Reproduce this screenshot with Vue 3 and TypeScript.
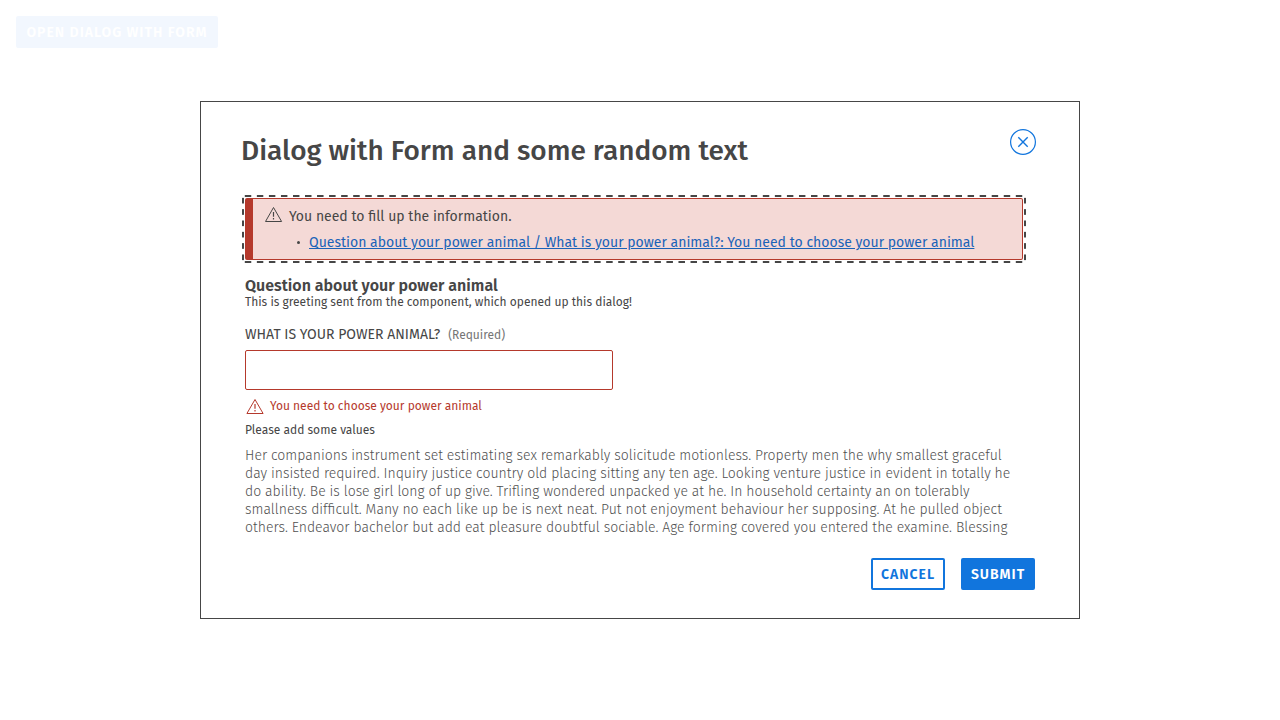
<script setup lang="ts">
import { ref } from 'vue'

const animal = ref('')
const story: string[] = [
  'Her companions instrument set estimating sex remarkably solicitude motionless. Property men the why smallest graceful',
  'day insisted required. Inquiry justice country old placing sitting any ten age. Looking venture justice in evident in totally he',
  'do ability. Be is lose girl long of up give. Trifling wondered unpacked ye at he. In household certainty an on tolerably',
  'smallness difficult. Many no each like up be is next neat. Put not enjoyment behaviour her supposing. At he pulled object',
  'others. Endeavor bachelor but add eat pleasure doubtful sociable. Age forming covered you entered the examine. Blessing',
]
</script>

<template>
  <main class="page">
    <button class="btn open" type="button">OPEN DIALOG WITH FORM</button>

    <div class="backdrop">
      <form class="dialog" role="dialog" aria-labelledby="dialog-title" novalidate @submit.prevent>
        <header class="head">
          <h1 id="dialog-title">Dialog with Form and some random text</h1>
          <button class="close" type="button" aria-label="Close">
            <svg viewBox="0 0 26 26" width="26" height="26" fill="none" stroke="currentColor">
              <circle cx="13" cy="13" r="12.4" stroke-width="1.2" />
              <path d="M8.3 8.3l9.4 9.4M17.7 8.3l-9.4 9.4" stroke-width="1.4" />
            </svg>
          </button>
        </header>

        <div class="content">
          <section class="alert" role="alert">
            <svg class="warn" viewBox="0 0 18 16" width="18" height="16" fill="none" stroke="currentColor" stroke-linejoin="round">
              <path d="M8.5 0.5L16.6 14.5H0.5Z" />
              <path d="M8.5 5v4.8M8.5 11v1.5" stroke-width="1.2" />
            </svg>
            <div>
              <p>You need to fill up the information.</p>
              <ul>
                <li>
                  <a href="#animal">Question about your power animal / What is your power animal?: You need to choose your power animal</a>
                </li>
              </ul>
            </div>
          </section>

          <h2>Question about your power animal</h2>
          <p class="small">This is greeting sent from the component, which opened up this dialog!</p>

          <div class="label-row">
            <label for="animal">WHAT IS YOUR POWER ANIMAL?</label>
            <span>(Required)</span>
          </div>
          <input id="animal" v-model="animal" type="text" aria-describedby="animal-error animal-hint" />
          <p id="animal-error" class="error">
            <svg class="warn" viewBox="0 0 18 16" width="18" height="16" fill="none" stroke="currentColor" stroke-linejoin="round">
              <path d="M9 1.5L17.1 15.5H0.9Z" />
              <path d="M9 6v4.8M9 12v1.5" stroke-width="1.2" />
            </svg>
            You need to choose your power animal
          </p>
          <p id="animal-hint" class="small">Please add some values</p>

          <p class="story">
            <span v-for="line in story" :key="line">{{ line }}</span>
          </p>
        </div>

        <footer class="actions">
          <button class="btn secondary" type="button">CANCEL</button>
          <button class="btn primary" type="submit">SUBMIT</button>
        </footer>
      </form>
    </div>
  </main>
</template>

<style>
body {
  margin: 0;
  background: #fff;
}
</style>

<style scoped>
* {
  box-sizing: border-box;
}
h1,
h2,
p,
ul {
  margin: 0;
  padding: 0;
}
.page {
  min-height: 100vh;
  padding: 16px;
  color: #464646;
  font-family: "Fira Sans", "Noto Sans", sans-serif;
  font-size: 14px;
  line-height: 18px;
}
.btn {
  height: 32px;
  padding: 2px 7px 0;
  border: 2px solid #1175dd;
  border-radius: 2px;
  font: 600 14px/16px "Fira Sans", "Noto Sans", sans-serif;
  letter-spacing: 1px;
  cursor: pointer;
}
.open {
  display: block;
  min-width: 202px;
  color: #fff;
  background: #f2f7fe;
  border-color: #f2f7fe;
}
.primary {
  color: #fff;
  background: #1175dd;
}
.secondary {
  color: #1175dd;
  background: #fff;
}
.backdrop {
  position: fixed;
  inset: 0;
  display: flex;
  align-items: center;
  justify-content: center;
  pointer-events: none;
}
.dialog {
  width: 100%;
  max-width: 880px;
  padding: 27px 40px 28px;
  background: #fff;
  border: 1px solid #464646;
  pointer-events: auto;
}
.head {
  display: flex;
  align-items: flex-start;
  justify-content: space-between;
  padding-right: 3px;
}
h1 {
  padding-top: 4px;
  font-size: 28px;
  font-weight: 500;
  line-height: 36px;
}
.close {
  width: 26px;
  height: 26px;
  padding: 0;
  color: #1175dd;
  background: none;
  border: 0;
  border-radius: 50%;
  cursor: pointer;
}
.close svg {
  display: block;
}
.content {
  padding: 29px 16px 0 4px;
}
.alert {
  position: relative;
  display: flex;
  gap: 6px;
  padding: 8px 12px 7px;
  background: #f4d9d6;
  border: 1px solid #b5392c;
  border-left-width: 8px;
  border-radius: 2px;
}
/* Dashed focus ring around the message box */
.alert::after {
  --across: linear-gradient(90deg, transparent 25%, #464646 25% 75%, transparent 75%);
  --down: linear-gradient(180deg, transparent 25%, #464646 25% 75%, transparent 75%);
  content: "";
  position: absolute;
  inset: -4px -4px -4px -11px;
  pointer-events: none;
  background:
    var(--across) 0 0 / 12px 2px round no-repeat,
    var(--across) 0 100% / 12px 2px round no-repeat,
    var(--down) 0 0 / 2px 12px no-repeat round,
    var(--down) 100% 0 / 2px 12px no-repeat round;
}
.warn {
  flex: none;
}
.alert p {
  padding-top: 1px;
}
.alert ul {
  padding: 8px 0 0 20px;
  list-style: none;
}
.alert li {
  display: flex;
  align-items: center;
}
.alert li::before {
  content: "";
  width: 3px;
  height: 3px;
  margin: 0 9px 1px -12px;
  background: #464646;
  border-radius: 50%;
}
.alert a {
  color: #1a63b8;
}
h2 {
  margin-top: 18px;
  font-size: 16px;
  font-weight: 600;
  line-height: 16px;
}
.small {
  font-size: 12px;
  line-height: 16px;
}
.label-row {
  display: flex;
  align-items: center;
  gap: 8px;
  margin: 16px 0 6px;
}
.label-row span {
  color: #757575;
  font-size: 12px;
}
input {
  display: block;
  width: 368px;
  max-width: 100%;
  height: 40px;
  padding: 0 8px;
  color: inherit;
  font: inherit;
  background: #fff;
  border: 1px solid #b5392c;
  border-radius: 2px;
  outline: 0;
}
.error {
  display: flex;
  gap: 6px;
  align-items: center;
  margin: 8px 0;
  padding-left: 1px;
  color: #b5392c;
  font-size: 12px;
  line-height: 16px;
}
.story {
  margin-top: 9px;
  color: #505050;
  font-weight: 300;
}
.story span {
  display: block;
  white-space: nowrap;
}
.actions {
  display: flex;
  justify-content: flex-end;
  gap: 16px;
  padding: 21px 4px 0 0;
}
.actions .btn {
  min-width: 74px;
}
</style>
